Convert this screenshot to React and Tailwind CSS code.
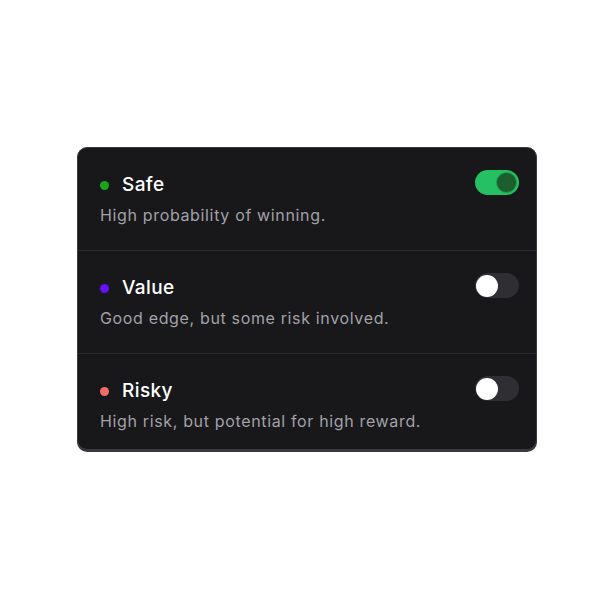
import React from "react";

const rows = [
  { title: "Safe", desc: "High probability of winning.", dot: "bg-[#1ba51b]", on: true },
  { title: "Value", desc: "Good edge, but some risk involved.", dot: "bg-[#6411f5]", on: false },
  { title: "Risky", desc: "High risk, but potential for high reward.", dot: "bg-[#f26b6b]", on: false },
];

function Toggle({ on }) {
  return on ? (
    <div className="flex h-[25px] w-[44px] items-center justify-end rounded-full bg-[#24c063] px-[2px]">
      <div className="h-[21px] w-[21px] rounded-full border border-[#1f9d4c] bg-[#1c5e2d]" />
    </div>
  ) : (
    <div className="flex h-[25px] w-[44px] items-center justify-start rounded-full bg-[#2f2f33] px-[1px]">
      <div className="h-[22px] w-[22px] rounded-full bg-white" />
    </div>
  );
}

export default function App() {
  return (
    <div className="flex h-[600px] w-[600px] items-start justify-start bg-white pl-[77px] pt-[147px]" style={{ fontFamily: "Inter, 'Open Sans', sans-serif" }}>
      <div className="w-[460px] overflow-hidden rounded-[10px] border border-[#3a3a3e] bg-[#18181b] shadow-[0_2px_0_#3a3a3e]">
        {rows.map((r, i) => (
          <div key={r.title} className={`flex items-start justify-between pl-[22px] pr-[17px] pt-[23px] ${i > 0 ? "border-t border-[#2a2a2e]" : ""} ${i === 2 ? "pb-[17px]" : "pb-[24px]"}`}>
            <div className="flex flex-col gap-[5px]">
              <div className="flex items-center gap-[13px]">
                <span className={`h-[9px] w-[9px] rounded-full ${r.dot}`} />
                <span className="text-[19px] font-medium leading-[28px] tracking-[0.4px] text-white">{r.title}</span>
              </div>
              <span className="text-[16px] leading-[22px] tracking-[0.65px] text-[#a1a1a8]">{r.desc}</span>
            </div>
            <div className="-mt-[1px]">
              <Toggle on={r.on} />
            </div>
          </div>
        ))}
      </div>
    </div>
  );
}
